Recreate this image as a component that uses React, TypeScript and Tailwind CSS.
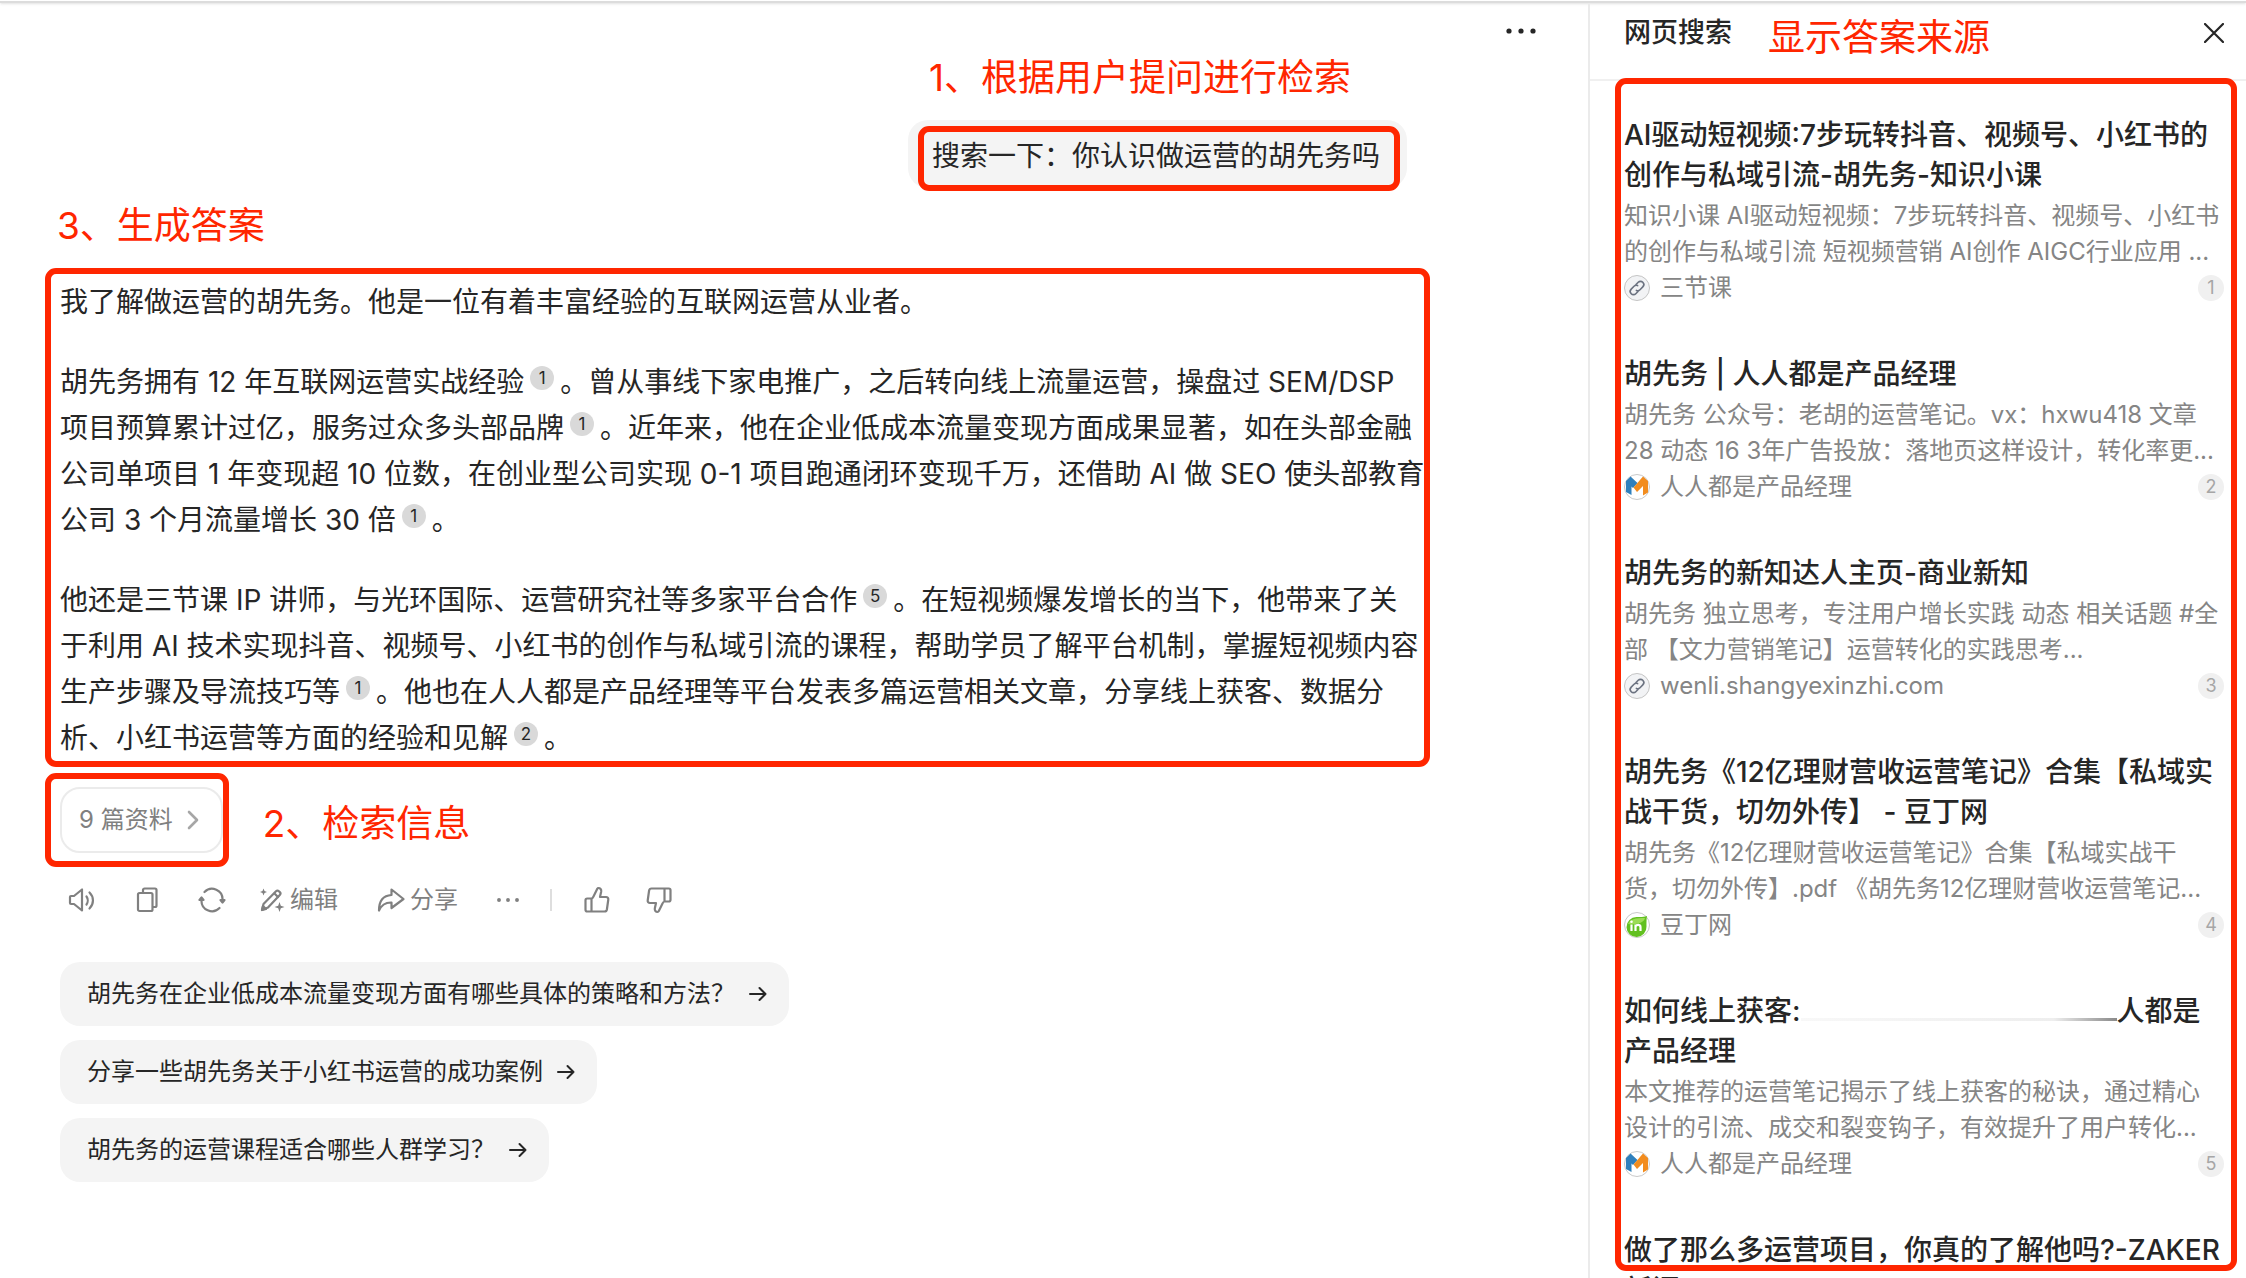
import React from 'react';

const ink = 'text-[#262626]';

function Cite({ n }: { n: number }) {
  return (
    <sup className="relative -top-[6px] mx-[6px] inline-flex h-6 w-6 items-center justify-center rounded-full bg-[#d9d9d9] align-middle text-[17px] leading-none">
      {n}
    </sup>
  );
}

function Note({ children, className = '' }: { children: React.ReactNode; className?: string }) {
  return <p className={`text-[37px] leading-[48px] whitespace-nowrap text-[#ff2600] ${className}`}>{children}</p>;
}

function Frame({ className }: { className: string }) {
  return <div aria-hidden="true" className={`pointer-events-none absolute rounded-[11px] border-[6px] border-[#ff2600] ${className}`} />;
}

function Dots({ className }: { className: string }) {
  return (
    <svg viewBox="0 0 30 8" className={className} fill="currentColor">
      <circle cx="3" cy="4" r="2.6" />
      <circle cx="15" cy="4" r="2.6" />
      <circle cx="27" cy="4" r="2.6" />
    </svg>
  );
}

const stroke = {
  fill: 'none',
  stroke: 'currentColor',
  strokeWidth: 2.2,
  strokeLinecap: 'round' as const,
  strokeLinejoin: 'round' as const,
};

function SpeakerIcon() {
  return (
    <svg viewBox="0 0 28 28" className="h-7 w-7" {...stroke}>
      <path d="M3 10h3l8-6.500v21L6 18H3c-.6 0-1-.4-1-1v-6c0-.6.4-1 1-1z" />
      <path d="M18.500 10.500c1.600 2.200 1.600 5.800 0 8M21.500 6.500c4.600 4.500 4.600 11.500 0 16" />
    </svg>
  );
}

function CopyIcon() {
  return (
    <svg viewBox="0 0 24 28" className="h-7 w-6" {...stroke}>
      <rect x="2" y="7" width="14.500" height="18" rx="1.500" />
      <path d="M7 6.500V4c0-.8.7-1.500 1.500-1.500H19c.8 0 1.500.7 1.500 1.500v15.500c0 .8-.7 1.500-1.500 1.500h-2" />
    </svg>
  );
}

function RefreshIcon() {
  return (
    <svg viewBox="0 0 28 28" className="h-7 w-7" {...stroke}>
      <path d="M6.500 6A10.500 10.500 0 0 1 24.500 14M21.500 22A10.500 10.500 0 0 1 3.500 14" />
      <path d="M22.500 14h4l-2 2.500zM1.500 14h4l-2-2.500z" fill="currentColor" />
    </svg>
  );
}

function EditIcon() {
  return (
    <svg viewBox="0 0 26 26" className="h-[26px] w-[26px]" {...stroke}>
      <path d="M3 23l1.500-6L17 4.200c.9-.9 2-.9 2.900 0l.9.900c.9.9.9 2 0 2.900L9 20.500z" />
      <path d="M15.500 6.500l3.500 3.500M3 23l1-4 3 3z" />
      <path d="M4.500 1.500l1 2.500 2.500 1-2.500 1-1 2.500-1-2.500-2.500-1 2.500-1z" fill="currentColor" stroke="none" />
      <path d="M20.500 15l1.300 3.700 3.700 1.300-3.700 1.300-1.300 3.700-1.300-3.700-3.700-1.300 3.700-1.300z" fill="currentColor" stroke="none" />
    </svg>
  );
}

function ShareIcon() {
  return (
    <svg viewBox="0 0 28 26" className="h-[26px] w-7" {...stroke}>
      <path d="M14.500 2.500L26.500 12l-12 9v-5.500C9 15.300 4.500 18 2 23.500 2 14 6.500 8.500 14.500 8z" />
    </svg>
  );
}

function ThumbIcon({ className = '' }: { className?: string }) {
  return (
    <svg viewBox="0 0 26 28" className={`h-7 w-[26px] ${className}`} {...stroke}>
      <path d="M7.500 12.500H3.200c-.9 0-1.700.7-1.700 1.700v9.600c0 .9.8 1.700 1.700 1.700h17.300c1.200 0 2.200-.9 2.400-2l1.400-10c.2-1.300-.8-2.500-2.200-2.500H16l1.200-5.500C17.500 3.500 16.200 2 14.500 2c-.6 0-1 .3-1.200.8L9.500 10.500c-.6 1.200-1 2-2 2zM7.500 12.500v13" />
    </svg>
  );
}

function ArrowIcon() {
  return (
    <svg viewBox="0 0 18 18" className="h-[18px] w-[18px]" {...stroke} strokeWidth={2}>
      <path d="M1 9h15.500M10.500 3l6 6-6 6" />
    </svg>
  );
}

function SiteIcon({ kind }: { kind: 'link' | 'pm' | 'docin' }) {
  if (kind === 'link') {
    return (
      <svg viewBox="0 0 26 26" className="h-[26px] w-[26px]">
        <circle cx="13" cy="13" r="12.500" fill="#f2f3f5" stroke="#c4c4c4" />
        <g fill="none" stroke="#6b7280" strokeWidth="1.600" strokeLinecap="round">
          <path d="M12 9.500l2.200-2.200a3.200 3.200 0 0 1 4.600 4.600l-2.800 2.800a3.200 3.200 0 0 1-3.600.7" />
          <path d="M14 16.500l-2.200 2.200a3.200 3.200 0 0 1-4.600-4.600l2.800-2.800a3.200 3.200 0 0 1 3.600-.7" />
        </g>
      </svg>
    );
  }
  if (kind === 'pm') {
    return (
      <svg viewBox="0 0 26 26" className="h-[26px] w-[26px]">
        <circle cx="13" cy="13" r="12.500" fill="#fff" stroke="#c9c9c9" />
        <path d="M2 7l4.500-4.500L13.500 9l-4.500 5-1.500-1.500V21L2 18z" fill="#2f80bd" />
        <path d="M9.500 13.500L19 2.500 24 7v11.500L19 21.500V12l-6 6z" fill="#f28c1e" />
      </svg>
    );
  }
  return (
    <svg viewBox="0 0 26 26" className="h-[26px] w-[26px]">
      <circle cx="13" cy="13" r="12.500" fill="#fff" stroke="#c9c9c9" />
      <path d="M23 4c-.5 2.500-.5 5-.5 10.500a10 10 0 1 1-10-9.500c4 0 7 .3 10.500-1z" fill="#62c020" />
      <path d="M4 12c2-5 7-6 17-6-1 5-9 7-17 6z" fill="#9bdc55" />
      <g fill="none" stroke="#fff" strokeWidth="2.200">
        <path d="M7.500 12.500V19M11.500 19v-6.500M11.500 14.500c1.500-2.500 5-2 5 .8V19" />
      </g>
      <circle cx="7.500" cy="9.800" r="1.300" fill="#fff" />
    </svg>
  );
}

type Source = {
  title: React.ReactNode;
  text?: [string, string];
  site?: string;
  icon?: 'link' | 'pm' | 'docin';
};

const sources: Source[] = [
  {
    title: <>AI驱动短视频:7步玩转抖音、视频号、小红书的<br />创作与私域引流-胡先务-知识小课</>,
    text: ['知识小课 AI驱动短视频：7步玩转抖音、视频号、小红书', '的创作与私域引流 短视频营销 AI创作 AIGC行业应用 ...'],
    site: '三节课',
    icon: 'link',
  },
  {
    title: '胡先务 | 人人都是产品经理',
    text: ['胡先务 公众号：老胡的运营笔记。vx：hxwu418 文章', '28 动态 16 3年广告投放：落地页这样设计，转化率更...'],
    site: '人人都是产品经理',
    icon: 'pm',
  },
  {
    title: '胡先务的新知达人主页-商业新知',
    text: ['胡先务 独立思考，专注用户增长实践 动态 相关话题 #全', '部 【文力营销笔记】运营转化的实践思考...'],
    site: 'wenli.shangyexinzhi.com',
    icon: 'link',
  },
  {
    title: <>胡先务《12亿理财营收运营笔记》合集【私域实<br />战干货，切勿外传】 - 豆丁网</>,
    text: ['胡先务《12亿理财营收运营笔记》合集【私域实战干', '货，切勿外传】.pdf 《胡先务12亿理财营收运营笔记...'],
    site: '豆丁网',
    icon: 'docin',
  },
  {
    title: (
      <>
        如何线上获客:
        <span className="inline-block h-[3px] w-[316px] bg-linear-to-r from-[#f8f8f8] via-[#eeeeee] via-80% to-[#8a8a8a]" />
        人都是<br />产品经理
      </>
    ),
    text: ['本文推荐的运营笔记揭示了线上获客的秘诀，通过精心', '设计的引流、成交和裂变钩子，有效提升了用户转化...'],
    site: '人人都是产品经理',
    icon: 'pm',
  },
  { title: <>做了那么多运营项目，你真的了解他吗?-ZAKER<br />新闻</> },
];

const suggestions = [
  '胡先务在企业低成本流量变现方面有哪些具体的策略和方法？',
  '分享一些胡先务关于小红书运营的成功案例',
  '胡先务的运营课程适合哪些人群学习？',
];

function Chat() {
  return (
    <main className="flex min-w-0 flex-1 flex-col pr-[158px] pl-[45px]">
      <div className="-mr-[106px] flex h-[51px] items-center justify-end pt-1">
        <button aria-label="更多"><Dots className="h-2 w-[30px]" /></button>
      </div>
      <Note className="mr-[79px] self-end">1、根据用户提问进行检索</Note>
      <div className="relative mt-[18px] mr-[23px] self-end rounded-[20px] bg-[#f4f4f4] pt-[13px] pr-[27px] pb-[9px] pl-6">
        <p className="text-[28px] leading-[46px]">搜索一下：你认识做运营的胡先务吗</p>
        <Frame className="top-[6px] right-[7px] -bottom-[3px] left-[10px]" />
      </div>
      <Note className="mt-[14px] ml-3">3、生成答案</Note>

      <article className="mt-[18px] flex flex-col gap-[34px] rounded-[11px] border-[6px] border-[#ff2600] pt-[5px] pl-[9px] text-[28px] leading-[46px] whitespace-nowrap">
        <p>我了解做运营的胡先务。他是一位有着丰富经验的互联网运营从业者。</p>
        <p>
          胡先务拥有 12 年互联网运营实战经验<Cite n={1} />。曾从事线下家电推广，之后转向线上流量运营，操盘过 SEM/DSP<br />
          项目预算累计过亿，服务过众多头部品牌<Cite n={1} />。近年来，他在企业低成本流量变现方面成果显著，如在头部金融<br />
          公司单项目 1 年变现超 10 位数，在创业型公司实现 0-1 项目跑通闭环变现千万，还借助 AI 做 SEO 使头部教育<br />
          公司 3 个月流量增长 30 倍<Cite n={1} />。
        </p>
        <p>
          他还是三节课 IP 讲师，与光环国际、运营研究社等多家平台合作<Cite n={5} />。在短视频爆发增长的当下，他带来了关<br />
          于利用 AI 技术实现抖音、视频号、小红书的创作与私域引流的课程，帮助学员了解平台机制，掌握短视频内容<br />
          生产步骤及导流技巧等<Cite n={1} />。他也在人人都是产品经理等平台发表多篇运营相关文章，分享线上获客、数据分<br />
          析、小红书运营等方面的经验和见解<Cite n={2} />。
        </p>
      </article>

      <div className="mt-[6px] flex items-center gap-[34px]">
        <div className="rounded-[11px] border-[6px] border-[#ff2600] py-2 pl-[9px]">
          <button className="flex h-[66px] items-center gap-[14px] rounded-[20px] border-2 border-[#ebebeb] pr-[22px] pl-[17px] text-2xl text-[#808080]">
            9 篇资料
            <svg viewBox="0 0 12 20" className="h-5 w-3 text-[#a6a6a6]" {...stroke} strokeWidth={2.6}>
              <path d="M2 2l8 8-8 8" />
            </svg>
          </button>
        </div>
        <Note className="pt-2">2、检索信息</Note>
      </div>

      <div className="mt-[13px] ml-[23px] flex h-10 items-center text-2xl text-[#808080]">
        <button aria-label="朗读"><SpeakerIcon /></button>
        <button aria-label="复制" className="ml-10"><CopyIcon /></button>
        <button aria-label="重新生成" className="ml-[38px]"><RefreshIcon /></button>
        <button className="ml-[33px] flex items-center gap-[5px]"><EditIcon />编辑</button>
        <button className="ml-[39px] flex items-center gap-[5px]"><ShareIcon />分享</button>
        <button aria-label="更多操作" className="ml-[38px]"><Dots className="h-[6px] w-6" /></button>
        <span className="ml-[30px] h-[22px] w-[2px] bg-[#dedede]" />
        <button aria-label="赞" className="ml-8"><ThumbIcon /></button>
        <button aria-label="踩" className="ml-9"><ThumbIcon className="rotate-180" /></button>
      </div>

      <div className="mt-[42px] ml-[15px] flex flex-col items-start gap-[14px]">
        {suggestions.map((s) => (
          <button key={s} className="flex h-16 items-center gap-[14px] rounded-[20px] bg-[#f4f4f4] pr-[22px] pl-[27px] text-2xl">
            {s}
            <ArrowIcon />
          </button>
        ))}
      </div>
    </main>
  );
}

function SearchPanel() {
  return (
    <aside className="relative flex h-full w-[658px] shrink-0 flex-col border-l-2 border-[#ebebeb]">
      <header className="flex h-[78px] shrink-0 items-center border-b-2 border-[#f0f0f0] pr-[22px] pb-4 pl-[34px]">
        <h2 className="text-[27px] leading-10 font-medium">网页搜索</h2>
        <Note className="ml-9 pt-[10px]">显示答案来源</Note>
        <button aria-label="关闭" className="ml-auto">
          <svg viewBox="0 0 20 20" className="h-5 w-5" {...stroke}>
            <path d="M1 1l18 18M19 1L1 19" />
          </svg>
        </button>
      </header>
      <ol className="flex min-h-0 flex-1 flex-col gap-12 overflow-hidden pt-[34px] pr-[22px] pl-[34px] whitespace-nowrap">
        {sources.map((s, i) => (
          <li key={i} className="shrink-0">
            <h3 className="text-[28px] leading-10 font-medium"><a href="#">{s.title}</a></h3>
            {s.text && (
              <>
                <p className="mt-[3px] text-2xl leading-9 text-[#858585]">{s.text[0]}<br />{s.text[1]}</p>
                <div className="flex h-9 items-center gap-[10px] text-2xl text-[#858585]">
                  <SiteIcon kind={s.icon!} />
                  {s.site}
                  <span className="ml-auto flex h-[26px] w-[26px] items-center justify-center rounded-full bg-[#f0f0f0] text-lg leading-none text-[#a6a6a6]">{i + 1}</span>
                </div>
              </>
            )}
          </li>
        ))}
      </ol>
      <Frame className="top-[75px] right-[9px] bottom-[7px] left-[25px]" />
    </aside>
  );
}

export default function App() {
  return (
    <div className={`flex h-screen flex-col overflow-hidden bg-white font-['Inter','Noto_Sans_CJK_SC',sans-serif] ${ink}`}>
      <div className="h-[3px] shrink-0 border-b-2 border-[#dcdcdc] shadow-sm" />
      <div className="flex min-h-0 flex-1">
        <Chat />
        <SearchPanel />
      </div>
    </div>
  );
}
